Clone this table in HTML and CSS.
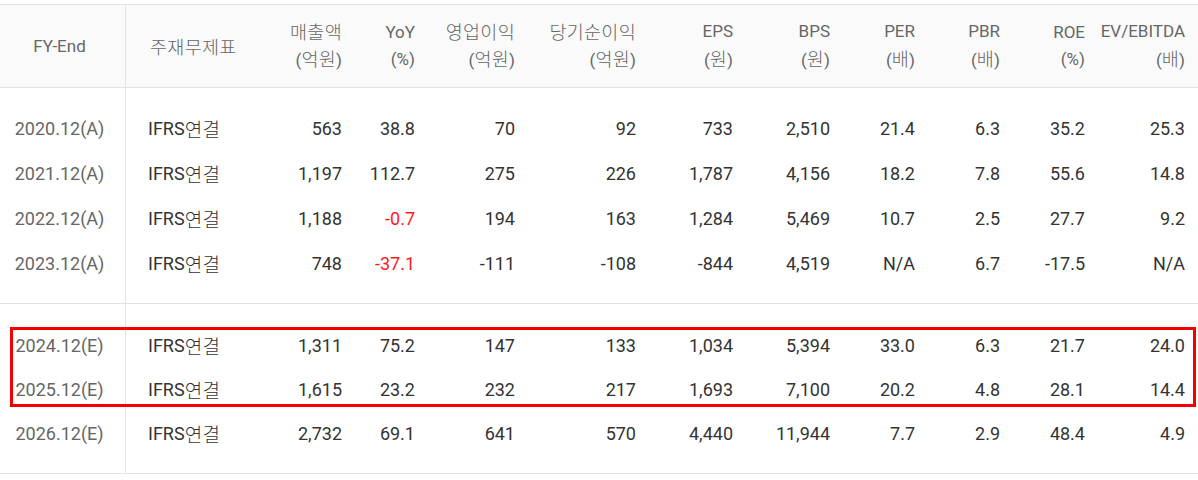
FILE: index.html
```html
<!DOCTYPE html>
<html lang="ko">
<head>
<meta charset="utf-8">
<link rel="stylesheet" href="styles.css">
</head>
<body>
<div class="table">
  <div class="row head">
    <div class="c c0 single">FY-End</div>
    <div class="c c1 single"><span class="ko">주재무제표</span></div>
    <div class="c"><span class="ko">매출액</span><span>(<i class="ko">억원</i>)</span></div>
    <div class="c"><span>YoY</span><span>(%)</span></div>
    <div class="c"><span class="ko">영업이익</span><span>(<i class="ko">억원</i>)</span></div>
    <div class="c"><span class="ko">당기순이익</span><span>(<i class="ko">억원</i>)</span></div>
    <div class="c"><span>EPS</span><span>(<i class="ko">원</i>)</span></div>
    <div class="c"><span>BPS</span><span>(<i class="ko">원</i>)</span></div>
    <div class="c"><span>PER</span><span>(<i class="ko">배</i>)</span></div>
    <div class="c"><span>PBR</span><span>(<i class="ko">배</i>)</span></div>
    <div class="c"><span>ROE</span><span>(%)</span></div>
    <div class="c"><span>EV/EBITDA</span><span>(<i class="ko">배</i>)</span></div>
    <div class="c"></div>
  </div>

  <div class="group g1">
    <div class="row">
      <div class="c c0">2020.12(A)</div><div class="c c1">IFRS<i class="ko">연결</i></div>
      <div class="c">563</div><div class="c">38.8</div><div class="c">70</div><div class="c">92</div>
      <div class="c">733</div><div class="c">2,510</div><div class="c">21.4</div><div class="c">6.3</div>
      <div class="c">35.2</div><div class="c">25.3</div><div class="c"></div>
    </div>
    <div class="row">
      <div class="c c0">2021.12(A)</div><div class="c c1">IFRS<i class="ko">연결</i></div>
      <div class="c">1,197</div><div class="c">112.7</div><div class="c">275</div><div class="c">226</div>
      <div class="c">1,787</div><div class="c">4,156</div><div class="c">18.2</div><div class="c">7.8</div>
      <div class="c">55.6</div><div class="c">14.8</div><div class="c"></div>
    </div>
    <div class="row">
      <div class="c c0">2022.12(A)</div><div class="c c1">IFRS<i class="ko">연결</i></div>
      <div class="c">1,188</div><div class="c neg">-0.7</div><div class="c">194</div><div class="c">163</div>
      <div class="c">1,284</div><div class="c">5,469</div><div class="c">10.7</div><div class="c">2.5</div>
      <div class="c">27.7</div><div class="c">9.2</div><div class="c"></div>
    </div>
    <div class="row">
      <div class="c c0">2023.12(A)</div><div class="c c1">IFRS<i class="ko">연결</i></div>
      <div class="c">748</div><div class="c neg">-37.1</div><div class="c">-111</div><div class="c">-108</div>
      <div class="c">-844</div><div class="c">4,519</div><div class="c">N/A</div><div class="c">6.7</div>
      <div class="c">-17.5</div><div class="c">N/A</div><div class="c"></div>
    </div>
  </div>

  <div class="group g2">
    <div class="highlight"></div>
    <div class="row">
      <div class="c c0">2024.12(E)</div><div class="c c1">IFRS<i class="ko">연결</i></div>
      <div class="c">1,311</div><div class="c">75.2</div><div class="c">147</div><div class="c">133</div>
      <div class="c">1,034</div><div class="c">5,394</div><div class="c">33.0</div><div class="c">6.3</div>
      <div class="c">21.7</div><div class="c">24.0</div><div class="c"></div>
    </div>
    <div class="row">
      <div class="c c0">2025.12(E)</div><div class="c c1">IFRS<i class="ko">연결</i></div>
      <div class="c">1,615</div><div class="c">23.2</div><div class="c">232</div><div class="c">217</div>
      <div class="c">1,693</div><div class="c">7,100</div><div class="c">20.2</div><div class="c">4.8</div>
      <div class="c">28.1</div><div class="c">14.4</div><div class="c"></div>
    </div>
    <div class="row">
      <div class="c c0">2026.12(E)</div><div class="c c1">IFRS<i class="ko">연결</i></div>
      <div class="c">2,732</div><div class="c">69.1</div><div class="c">641</div><div class="c">570</div>
      <div class="c">4,440</div><div class="c">11,944</div><div class="c">7.7</div><div class="c">2.9</div>
      <div class="c">48.4</div><div class="c">4.9</div><div class="c"></div>
    </div>
  </div>
</div>
</body>
</html>
```

FILE: styles.css
```css
html, body {
  margin: 0;
  padding: 0;
  background: #fff;
}

body {
  padding-top: 4px;
  font-family: Roboto, "Noto Sans CJK KR", sans-serif;
  color: #333;
}

.table {
  width: 1198px;
  border-top: 1px solid #e3e3e3;
  border-bottom: 1px solid #e3e3e3;
}

.row {
  display: grid;
  grid-template-columns: 126px 144px 72px 73px 100px 121px 97px 97px 85px 85px 85px 100px 13px;
  align-items: center;
}

.c {
  text-align: right;
  white-space: nowrap;
  height: 100%;
  display: flex;
  align-items: center;
  justify-content: flex-end;
}

.ko {
  font-family: "Noto Sans CJK KR", sans-serif;
  font-style: normal;
  font-weight: 300;
  font-size: 18.5px;
  letter-spacing: 0.3px;
}

.c0 {
  justify-content: center;
  padding-right: 6px;
  color: #666;
  border-right: 1px solid #e3e3e3;
  box-sizing: border-box;
}

.c1 {
  justify-content: flex-start;
  padding-left: 22px;
}

.head {
  height: 82px;
  background: #fafafa;
  border-bottom: 1px solid #e3e3e3;
  font-size: 17px;
  color: #666;
}

.head .c {
  flex-direction: column;
  align-items: flex-end;
  justify-content: center;
  line-height: 27px;
}

.head .c.single {
  align-items: center;
}

.head .c.c1 {
  align-items: flex-start;
  padding-left: 24px;
}

.head .c span {
  display: block;
}

.group .row {
  font-size: 18px;
  line-height: 24px;
}

.group .ko {
  font-size: 19px;
}

.g1 {
  padding: 18px 0 17px;
  border-bottom: 1px solid #e3e3e3;
}

.g1 .row {
  height: 45px;
}

.g2 {
  position: relative;
  padding: 20px 0 17px;
}

.g2 .row {
  height: 44px;
}

.group {
  background-image: linear-gradient(#e3e3e3, #e3e3e3);
  background-size: 1px 100%;
  background-position: 125px 0;
  background-repeat: no-repeat;
}

.neg {
  color: #ff1a1a;
}

.highlight {
  position: absolute;
  left: 10px;
  top: 23px;
  width: 1186px;
  height: 80px;
  box-sizing: border-box;
  border: 3px solid #f40000;
  pointer-events: none;
}
```
